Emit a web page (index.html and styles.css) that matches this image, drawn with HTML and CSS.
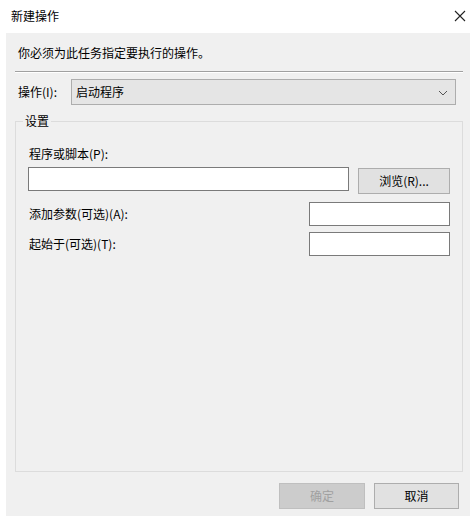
FILE: index.html
```html
<!DOCTYPE html>
<html lang="zh-CN">
<head>
<meta charset="utf-8">
<link rel="stylesheet" href="styles.css">
</head>
<body>
<div class="window">
  <div class="titlebar">
    <span class="title">新建操作</span>
    <svg class="close" width="12" height="12" viewBox="0 0 12 12"><path d="M1 1 L11 11 M11 1 L1 11" stroke="#222" stroke-width="1.1" fill="none"/></svg>
  </div>
  <div class="panel">
    <div class="instruction">你必须为此任务指定要执行的操作。</div>
    <div class="separator"></div>
    <div class="combo-row">
      <span class="combo-label">操作(I):</span>
      <div class="combo">
        <span>启动程序</span>
        <svg class="chev" width="10" height="6" viewBox="0 0 10 6"><path d="M1 1 L5 5 L9 1" stroke="#555" stroke-width="1" fill="none"/></svg>
      </div>
    </div>
    <fieldset class="group">
      <legend class="legend">设置</legend>
      <div class="label first">程序或脚本(P):</div>
      <div class="row-program">
        <div class="input wide"></div>
        <div class="btn browse">浏览(R)...</div>
      </div>
      <div class="row-field row-args">
        <span class="label">添加参数(可选)(A):</span>
        <div class="input small"></div>
      </div>
      <div class="row-field row-start">
        <span class="label">起始于(可选)(T):</span>
        <div class="input small"></div>
      </div>
    </fieldset>
    <div class="buttons">
      <div class="btn disabled">确定</div>
      <div class="btn cancel">取消</div>
    </div>
  </div>
</div>
</body>
</html>
```
FILE: styles.css
```css
* { box-sizing: border-box; }
html, body { margin: 0; padding: 0; background: #fff; }
body {
  width: 470px;
  height: 516px;
  overflow: hidden;
  font-family: "Noto Sans CJK SC", "Microsoft YaHei", sans-serif;
  font-size: 12px;
  color: #000;
}
.window { display: flex; flex-direction: column; height: 516px; }
.titlebar {
  height: 33px;
  display: flex;
  align-items: center;
  justify-content: space-between;
  padding: 0 4px 2px 11px;
}
.title { font-size: 12px; line-height: 16px; color: #000; }
.close { margin-right: 0; }
.panel {
  margin-left: 6px;
  flex: 1;
  background: #f0f0f0;
  display: flex;
  flex-direction: column;
}
.instruction {
  margin: 12px 0 0 12px;
  line-height: 16px;
  height: 16px;
}
.separator {
  margin: 10px 7px 0 9px;
  height: 2px;
  border-top: 1px solid #a0a0a0;
  border-bottom: 1px solid #fff;
}
.combo-row {
  margin-top: 6px;
  display: flex;
  align-items: center;
  height: 26px;
}
.combo-label { margin-left: 12px; width: 53px; line-height: 16px; }
.combo {
  width: 385px;
  height: 26px;
  background: #e5e5e5;
  border: 1px solid #adadad;
  display: flex;
  align-items: center;
  justify-content: space-between;
  padding: 0 7px 0 4px;
  line-height: 16px;
}
.chev { margin-top: 1px; }
.group {
  margin: 8px 7px 0 9px;
  padding: 0 12px 0 12px;
  border: 1px solid #dcdcdc;
  flex: 1;
  min-width: 0;
}
.legend {
  padding: 0 2px;
  margin-left: -5px;
  line-height: 16px;
}
.label { line-height: 16px; display: block; }
.label.first { margin-left: 1px; margin-top: 17px; }
.row-program {
  margin-top: 5px;
  display: flex;
  align-items: flex-start;
  justify-content: space-between;
}
.input {
  height: 24px;
  background: #fff;
  border: 1px solid #7a7a7a;
}
.input.wide { width: 321px; }
.input.small { width: 141px; }
.btn {
  display: flex;
  align-items: center;
  justify-content: center;
  height: 26px;
  background: #e1e1e1;
  border: 1px solid #adadad;
  line-height: 16px;
}
.browse { width: 92px; margin-top: 1px; }
.row-field {
  display: flex;
  align-items: center;
  justify-content: space-between;
  height: 24px;
}
.row-field .label { margin-left: 1px; }
.row-args { margin-top: 8px; }
.row-start { margin-top: 6px; }
.buttons {
  display: flex;
  justify-content: flex-end;
  gap: 9px;
  margin: 11px 11px 7px 0;
}
.buttons .btn { width: 86px; }
.btn.disabled { background: #cccccc; border-color: #bfbfbf; color: #a0a0a0; }
.btn.cancel { width: 85px; }
```
